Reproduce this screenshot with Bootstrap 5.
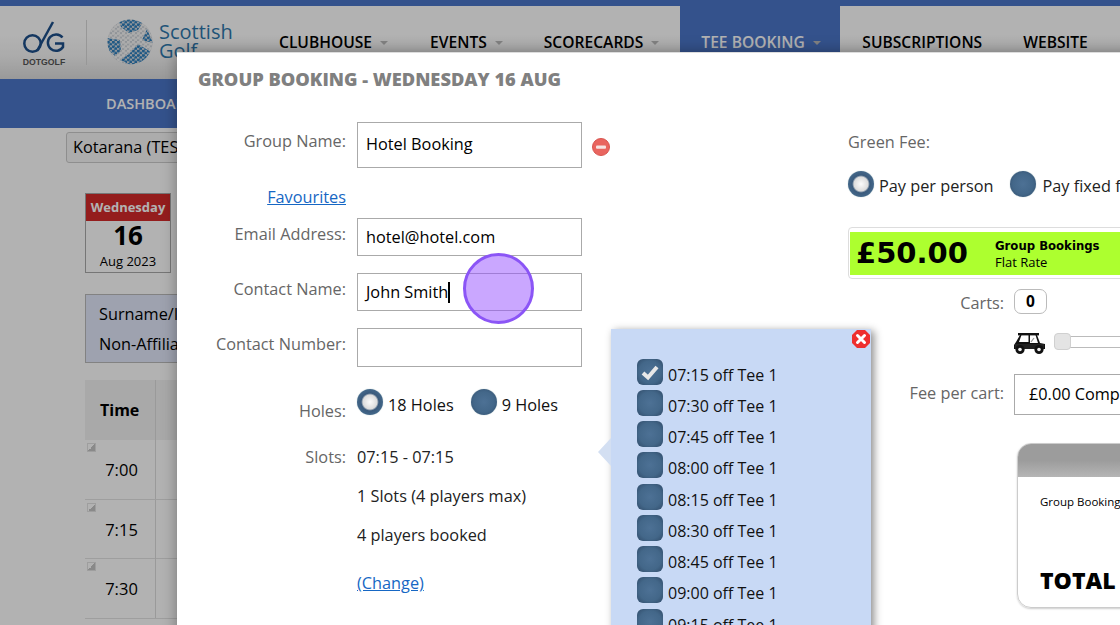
<!DOCTYPE html>
<html lang="en">
<head>
<meta charset="utf-8">
<title>Group Booking</title>
<link href="https://cdn.jsdelivr.net/npm/bootstrap@5.3.0/dist/css/bootstrap.min.css" rel="stylesheet">
<style>
html,body{height:625px;overflow:hidden}
body{font-family:"Open Sans",sans-serif;background:#fff;color:#000;font-size:16.3px;width:1120px;position:relative}
.topstrip{height:6px;background:#4b76c9}
.headbar{height:73px;background:linear-gradient(#fff 40%,#f4f4f4 70%,#dcdcdc)}
.logo-zone{width:279px;height:73px;flex:none}
.divider-v{width:1px;height:45px;background:#d9d9d9;margin:14px 20px 0 20px}
.dot-mark{margin:15px 0 0 22px;width:44px}
.dot-mark span{display:block;font-family:"Liberation Sans",sans-serif;font-weight:700;font-size:8.7px;color:#555;text-align:center;line-height:9px;margin-top:-3px;white-space:nowrap}
.sg-ball{margin-top:12.5px}
.sg-text{margin:16px 0 0 6px;font-size:20px;line-height:19px;color:#2f78ac}
.mainlink{font-size:15.6px;font-weight:600;line-height:20px;color:#000;padding-top:26px;text-decoration:none;white-space:nowrap;margin-left:41px}
.mainlink:first-child{margin-left:0}
.mainlink:nth-child(2){margin-left:42px}
.caret-s{display:inline-block;border-left:4px solid transparent;border-right:4px solid transparent;border-top:4px solid #bbb;margin-left:8px;vertical-align:3px}
.tabactive{background:#4b76c9;color:#fff;width:160px;padding-left:21px;height:73px;margin-left:21px}
.after-tab{margin-left:22px}
.subbar{height:49px;background:#4b76c9;color:#fff;font-weight:600;font-size:14.5px;padding:14px 0 0 106px}
.club-pick{margin:4px 0 0 66px;width:200px;height:31px;border:1px solid #ccc;border-radius:3px;background:#f6f6f6;padding:0 0 0 6px;font-size:16.3px;line-height:29px}
.cal-box{margin:30px 0 0 85px;width:86px;height:80px;border:1px solid #aaa;background:#fff;text-align:center}
.cal-top{height:27px;background:#d42a2a;color:#fff;font-weight:700;font-size:13px;line-height:27px}
.cal-day{font-weight:700;font-size:26px;line-height:29px}
.cal-mon{font-size:13px;line-height:22px}
.search-panel{margin:21px 0 0 85px;height:69px;width:300px;background:#e3e9fb;border:1px solid #bbb;padding:4px 0 0 13px;line-height:30px}
.slot-grid{margin:17px 0 0 85px;width:300px}
.slot-head{height:60px;background:#f2f2f2;display:flex}
.slot-head b{width:71px;padding:18px 0 0 15px;font-size:16px;line-height:24px;border-right:1px solid #ddd}
.slot-line{height:59.6px;border-bottom:1px solid #e3e3e3;position:relative}
.slot-line span{display:block;width:71px;text-align:center;padding:18px 0 0 3px;line-height:24px;font-size:16.5px;border-right:1px solid #ddd;height:59px}
.slot-line i{position:absolute;left:2px;top:3px;width:9px;height:9px;border:1px solid #e2e2e2;background:linear-gradient(135deg,#fff 50%,#c4c4c4 50%)}
.dim-layer{position:absolute;inset:0;background:rgba(0,0,0,.3)}
.dlg{position:absolute;left:177px;top:52px;width:1100px;height:700px;background:#fff;box-shadow:0 0 14px rgba(0,0,0,.35);border-top:1px solid #ddd}
.dlg-title{font-size:18.25px;font-weight:800;color:#808080;line-height:24px;padding:14px 0 0 21px;height:69px;text-transform:uppercase}
.lab{width:169px;text-align:right;color:#666;line-height:24px;flex:none}
.lab-top8{padding-top:7px}.lab-top4{padding-top:4px}.lab-top11{padding-top:11px}
.fav-row{padding-top:17px;height:50px}
.inp{width:225px;margin-left:11px;border:1px solid #aaa;border-radius:0;background:#fff;padding:0 8px;color:#000;flex:none;display:flex;align-items:center}
.h46{height:46px;padding-bottom:2px}.h38{height:38px}.h39{height:39px}
.gap17{margin-top:17px}
.holes-row{margin-top:21px;height:40px}
.holes-opts{padding-left:11px;line-height:26px;padding-top:1px}
.opt-txt{margin:3px 0 0 5px;color:#111}
.opt-next{margin-left:17px}
.slots-row{margin-top:17px}
.slots-val{margin-left:11px;line-height:24px;color:#222}
.slots-more{margin:15px 0 0 180px;line-height:24px;color:#222}
.slots-chg{margin:24px 0 0 180px;line-height:24px}
.blink{display:inline-block;width:2px;height:21px;background:#000}
.minus-ic{margin:16px 0 0 10px}
.fav,.chg{color:#1667c4;text-decoration:underline}
.rad{display:inline-block;width:26px;height:26px;border-radius:50%;background:radial-gradient(circle,#4d7195 0,#436789 55%,#2f4a68 100%);flex:none;box-shadow:0 0 1px #8aa}
.rad.on{background:radial-gradient(circle,#fbfbfb 0,#dcdcdc 38%,#3a5a7c 48%,#436789 70%,#2f4a68 100%)}
.tick{display:flex;align-items:center;justify-content:center;width:26px;height:26px;border-radius:6px;background:radial-gradient(circle,#4d7195 0,#436789 60%,#2f4a68 100%);flex:none}
.pop-slots{position:absolute;left:434px;top:276px;width:260px;height:420px;background:#c8d9f5;box-shadow:3px 2px 8px rgba(0,0,0,.45);padding:29.5px 0 0 26px}
.pop-slots::before{content:"";position:absolute;left:-13px;top:109px;border-top:14px solid transparent;border-bottom:14px solid transparent;border-right:13px solid #d3dff2}
.pop-row{height:31.25px;font-size:16px;line-height:26px;gap:5px;white-space:nowrap;color:#111}
.pop-row span:last-child{padding-top:3px}
.pop-x{position:absolute;left:241px;top:1px}
.rhs{position:absolute;left:671px;top:0;width:420px}
.green-lab{position:absolute;left:0;top:77px;color:#666;line-height:24px}
.pay-opts{position:absolute;left:0;top:118px;white-space:nowrap;line-height:26px;color:#222}
.pay-opts .pay-a{margin:2px 0 0 5px}
.pay-opts .pay-b{margin:2px 0 0 7px}
.pay-next{margin-left:16px}
.fee-card{position:absolute;left:0;top:174px;width:400px;height:52px;border:1px solid #ddd;border-radius:4px;padding:4px 1px}
.fee-fill{background:#adff2f;height:43px;display:flex}
.fee-amt{font-family:"DejaVu Sans",sans-serif;font-weight:700;font-size:29px;line-height:43px;padding-left:6px;width:145px;flex:none}
.fee-name{font-family:"DejaVu Sans",sans-serif;font-weight:700;font-size:11.7px;line-height:14px;padding-top:7px}
.fee-sub{font-size:13px;line-height:17px;padding-top:1px}
.lab-r{position:absolute;color:#666;line-height:24px;right:264px;white-space:nowrap}
.lab-carts{top:238px}.lab-cartfee{top:328px}
.cart-count{position:absolute;left:166px;top:236px;width:33px;height:25px;border:1px solid #bbb;border-radius:7px;text-align:center;font-weight:700;font-size:15.5px;line-height:22px}
.cart-ic{position:absolute;left:165px;top:279px}
.track{position:absolute;left:206px;top:283px;width:300px;height:12px;border:1px solid #bbb;border-radius:3px}
.thumb{position:absolute;left:206px;top:280px;width:17px;height:17px;background:#e4e4e4;border:1px solid #d0d0d0;border-radius:4px}
.fee-sel{position:absolute;left:166px;top:321px;width:300px;height:41px;border:1px solid #aaa;padding:0 14px;line-height:39px}
.recv{position:absolute;left:169px;top:390px;width:300px;height:165px;border:1px solid #ccc;border-radius:14px;overflow:hidden;box-shadow:0 1px 2px rgba(0,0,0,.2)}
.recv-top{height:33px;background:linear-gradient(#9c9c9c 50%,#b5b5b5)}
.recv-line{font-size:11.5px;padding:17px 0 0 22px;line-height:16px}
.recv-total{font-weight:800;font-size:23px;padding:54px 0 0 22px;line-height:32px}
.touch{position:absolute;left:463px;top:253px;width:71px;height:71px;border-radius:50%;background:rgba(150,80,255,.5);border:3px solid #8b55f6}
</style>
</head>
<body>
<div class="topstrip"></div>
<header class="headbar d-flex">
  <div class="logo-zone d-flex">
    <div class="dot-mark">
      <svg width="44" height="40" viewBox="0 0 44 40" fill="none" stroke="#1d4f8a" stroke-width="2.5"><circle cx="10.5" cy="22.5" r="8.2"/><path d="M15 30 L31 1"/><path d="M40.5 16.5 A8.2 8.2 0 1 0 41 26 V22.5 H33"/></svg>
      <span>DOTGOLF</span>
    </div>
    <div class="divider-v"></div>
    <svg class="sg-ball" width="46" height="46" viewBox="0 0 46 46">
      <defs>
        <pattern id="dots" width="5" height="4.4" patternUnits="userSpaceOnUse"><circle cx="1.3" cy="1.2" r="1.6" fill="#2f7fbc"/><circle cx="3.8" cy="3.4" r="1.6" fill="#2f7fbc"/></pattern>
        <pattern id="hex" width="5" height="4.4" patternUnits="userSpaceOnUse"><circle cx="1.3" cy="1.2" r="1.7" fill="#f6f6f6"/><circle cx="3.8" cy="3.4" r="1.7" fill="#f6f6f6"/></pattern>
        <clipPath id="ballclip"><circle cx="23" cy="23" r="22.5"/></clipPath>
      </defs>
      <circle cx="23" cy="23" r="22.5" fill="#cfd4da"/>
      <circle cx="23" cy="23" r="22.5" fill="url(#hex)"/>
      <g clip-path="url(#ballclip)" fill="url(#dots)">
        <path d="M11 0 H38 L31 11 L22 14 L14 8 Z"/>
        <path d="M0 19 L13 21 L14 32 L8 37 L0 30 Z"/>
        <path d="M40 10 L46 24 L35 21 Z"/>
        <path d="M31 25 L44 33 L38 44 L24 46 L13 41 L22 35 Z"/>
      </g>
    </svg>
    <div class="sg-text">Scottish<br>Golf</div>
  </div>
  <nav class="d-flex flex-grow-1">
    <a class="mainlink" href="#">CLUBHOUSE<i class="caret-s"></i></a>
    <a class="mainlink" href="#">EVENTS<i class="caret-s"></i></a>
    <a class="mainlink" href="#">SCORECARDS<i class="caret-s"></i></a>
    <a class="mainlink tabactive" href="#">TEE BOOKING<i class="caret-s"></i></a>
    <a class="mainlink after-tab" href="#">SUBSCRIPTIONS</a>
    <a class="mainlink" href="#">WEBSITE</a>
  </nav>
</header>
<div class="subbar">DASHBOARD</div>
<div class="club-pick">Kotarana (TEST)</div>
<div class="cal-box">
  <div class="cal-top">Wednesday</div>
  <div class="cal-day">16</div>
  <div class="cal-mon">Aug 2023</div>
</div>
<div class="search-panel">Surname/ID<br>Non-Affiliated</div>
<div class="slot-grid">
  <div class="slot-head"><b>Time</b></div>
  <div class="slot-line"><i></i><span>7:00</span></div>
  <div class="slot-line"><i></i><span>7:15</span></div>
  <div class="slot-line"><i></i><span>7:30</span></div>
</div>
<div class="dim-layer"></div>
<section class="dlg">
  <div class="dlg-title">Group Booking - Wednesday 16 Aug</div>
  <div class="d-flex align-items-start">
    <label class="lab lab-top8">Group Name:</label>
    <div class="inp h46">Hotel Booking</div>
    <svg class="minus-ic" width="18" height="18" viewBox="0 0 18 18"><circle cx="9" cy="9" r="8.5" fill="#e9655f" stroke="#d8554f"/><rect x="4" y="7.5" width="10" height="3.2" rx="1" fill="#f6e4e2"/></svg>
  </div>
  <div class="lab fav-row"><a class="fav" href="#">Favourites</a></div>
  <div class="d-flex align-items-start">
    <label class="lab lab-top4">Email Address:</label>
    <div class="inp h38">hotel@hotel.com</div>
  </div>
  <div class="d-flex align-items-start gap17">
    <label class="lab lab-top4">Contact Name:</label>
    <div class="inp h38">John Smith<i class="blink"></i></div>
  </div>
  <div class="d-flex align-items-start gap17">
    <label class="lab lab-top4">Contact Number:</label>
    <div class="inp h39"></div>
  </div>
  <div class="d-flex align-items-start holes-row">
    <label class="lab lab-top11">Holes:</label>
    <div class="d-flex holes-opts">
      <span class="rad on"></span><span class="opt-txt">18 Holes</span>
      <span class="rad opt-next"></span><span class="opt-txt">9 Holes</span>
    </div>
  </div>
  <div class="d-flex align-items-start slots-row">
    <label class="lab">Slots:</label>
    <div class="slots-val">07:15 - 07:15</div>
  </div>
  <div class="slots-more">1 Slots (4 players max)</div>
  <div class="slots-more">4 players booked</div>
  <div class="slots-chg"><a class="chg" href="#">(Change)</a></div>

  <aside class="pop-slots">
    <svg class="pop-x" width="18" height="18" viewBox="0 0 18 18"><path d="M5 0H13L18 5V13L13 18H5L0 13V5Z" fill="#ee2f2f"/><path d="M5.5 5.5L12.5 12.5M12.5 5.5L5.5 12.5" stroke="#fff" stroke-width="3" stroke-linecap="round"/></svg>
    <div class="d-flex pop-row"><span class="tick"><svg width="20" height="18" viewBox="0 0 20 18"><path d="M3 10L8 14.5L17 4" fill="none" stroke="#e8e8e8" stroke-width="4"/></svg></span><span>07:15 off Tee 1</span></div>
    <div class="d-flex pop-row"><span class="tick"></span><span>07:30 off Tee 1</span></div>
    <div class="d-flex pop-row"><span class="tick"></span><span>07:45 off Tee 1</span></div>
    <div class="d-flex pop-row"><span class="tick"></span><span>08:00 off Tee 1</span></div>
    <div class="d-flex pop-row"><span class="tick"></span><span>08:15 off Tee 1</span></div>
    <div class="d-flex pop-row"><span class="tick"></span><span>08:30 off Tee 1</span></div>
    <div class="d-flex pop-row"><span class="tick"></span><span>08:45 off Tee 1</span></div>
    <div class="d-flex pop-row"><span class="tick"></span><span>09:00 off Tee 1</span></div>
    <div class="d-flex pop-row"><span class="tick"></span><span>09:15 off Tee 1</span></div>
  </aside>

  <div class="rhs">
    <div class="green-lab">Green Fee:</div>
    <div class="d-flex pay-opts">
      <span class="rad on"></span><span class="pay-a">Pay per person</span>
      <span class="rad pay-next"></span><span class="pay-b">Pay fixed fee</span>
    </div>
    <div class="fee-card"><div class="fee-fill"><div class="fee-amt">£50.00</div><div><div class="fee-name">Group Bookings</div><div class="fee-sub">Flat Rate</div></div></div></div>
    <div class="lab-r lab-carts">Carts:</div>
    <div class="cart-count">0</div>
    <svg class="cart-ic" width="33" height="23" viewBox="0 0 33 23"><rect x="5" y="1" width="21" height="2.4" fill="#111"/><path d="M7 3L3 10L1 13V17H32V12L27 11L24 3H22.5L25 11H17V3H15.5V10H6L8.5 3Z" fill="#111"/><path d="M2 12H31V17H2Z" fill="#222"/><path d="M18 10L21 6" stroke="#999" stroke-width="1.2"/><circle cx="7" cy="17.5" r="4.6" fill="#111"/><circle cx="7" cy="17.5" r="1.8" fill="#eee"/><circle cx="26" cy="17.5" r="4.6" fill="#111"/><circle cx="26" cy="17.5" r="1.8" fill="#eee"/></svg>
    <div class="track"></div><div class="thumb"></div>
    <div class="lab-r lab-cartfee">Fee per cart:</div>
    <div class="fee-sel">£0.00 Complimentary</div>
    <div class="recv"><div class="recv-top"></div><div class="recv-line">Group Booking</div><div class="recv-total">TOTAL</div></div>
  </div>
</section>
<div class="touch"></div>
<script src="https://cdn.jsdelivr.net/npm/bootstrap@5.3.0/dist/js/bootstrap.bundle.min.js"></script>
</body>
</html>
